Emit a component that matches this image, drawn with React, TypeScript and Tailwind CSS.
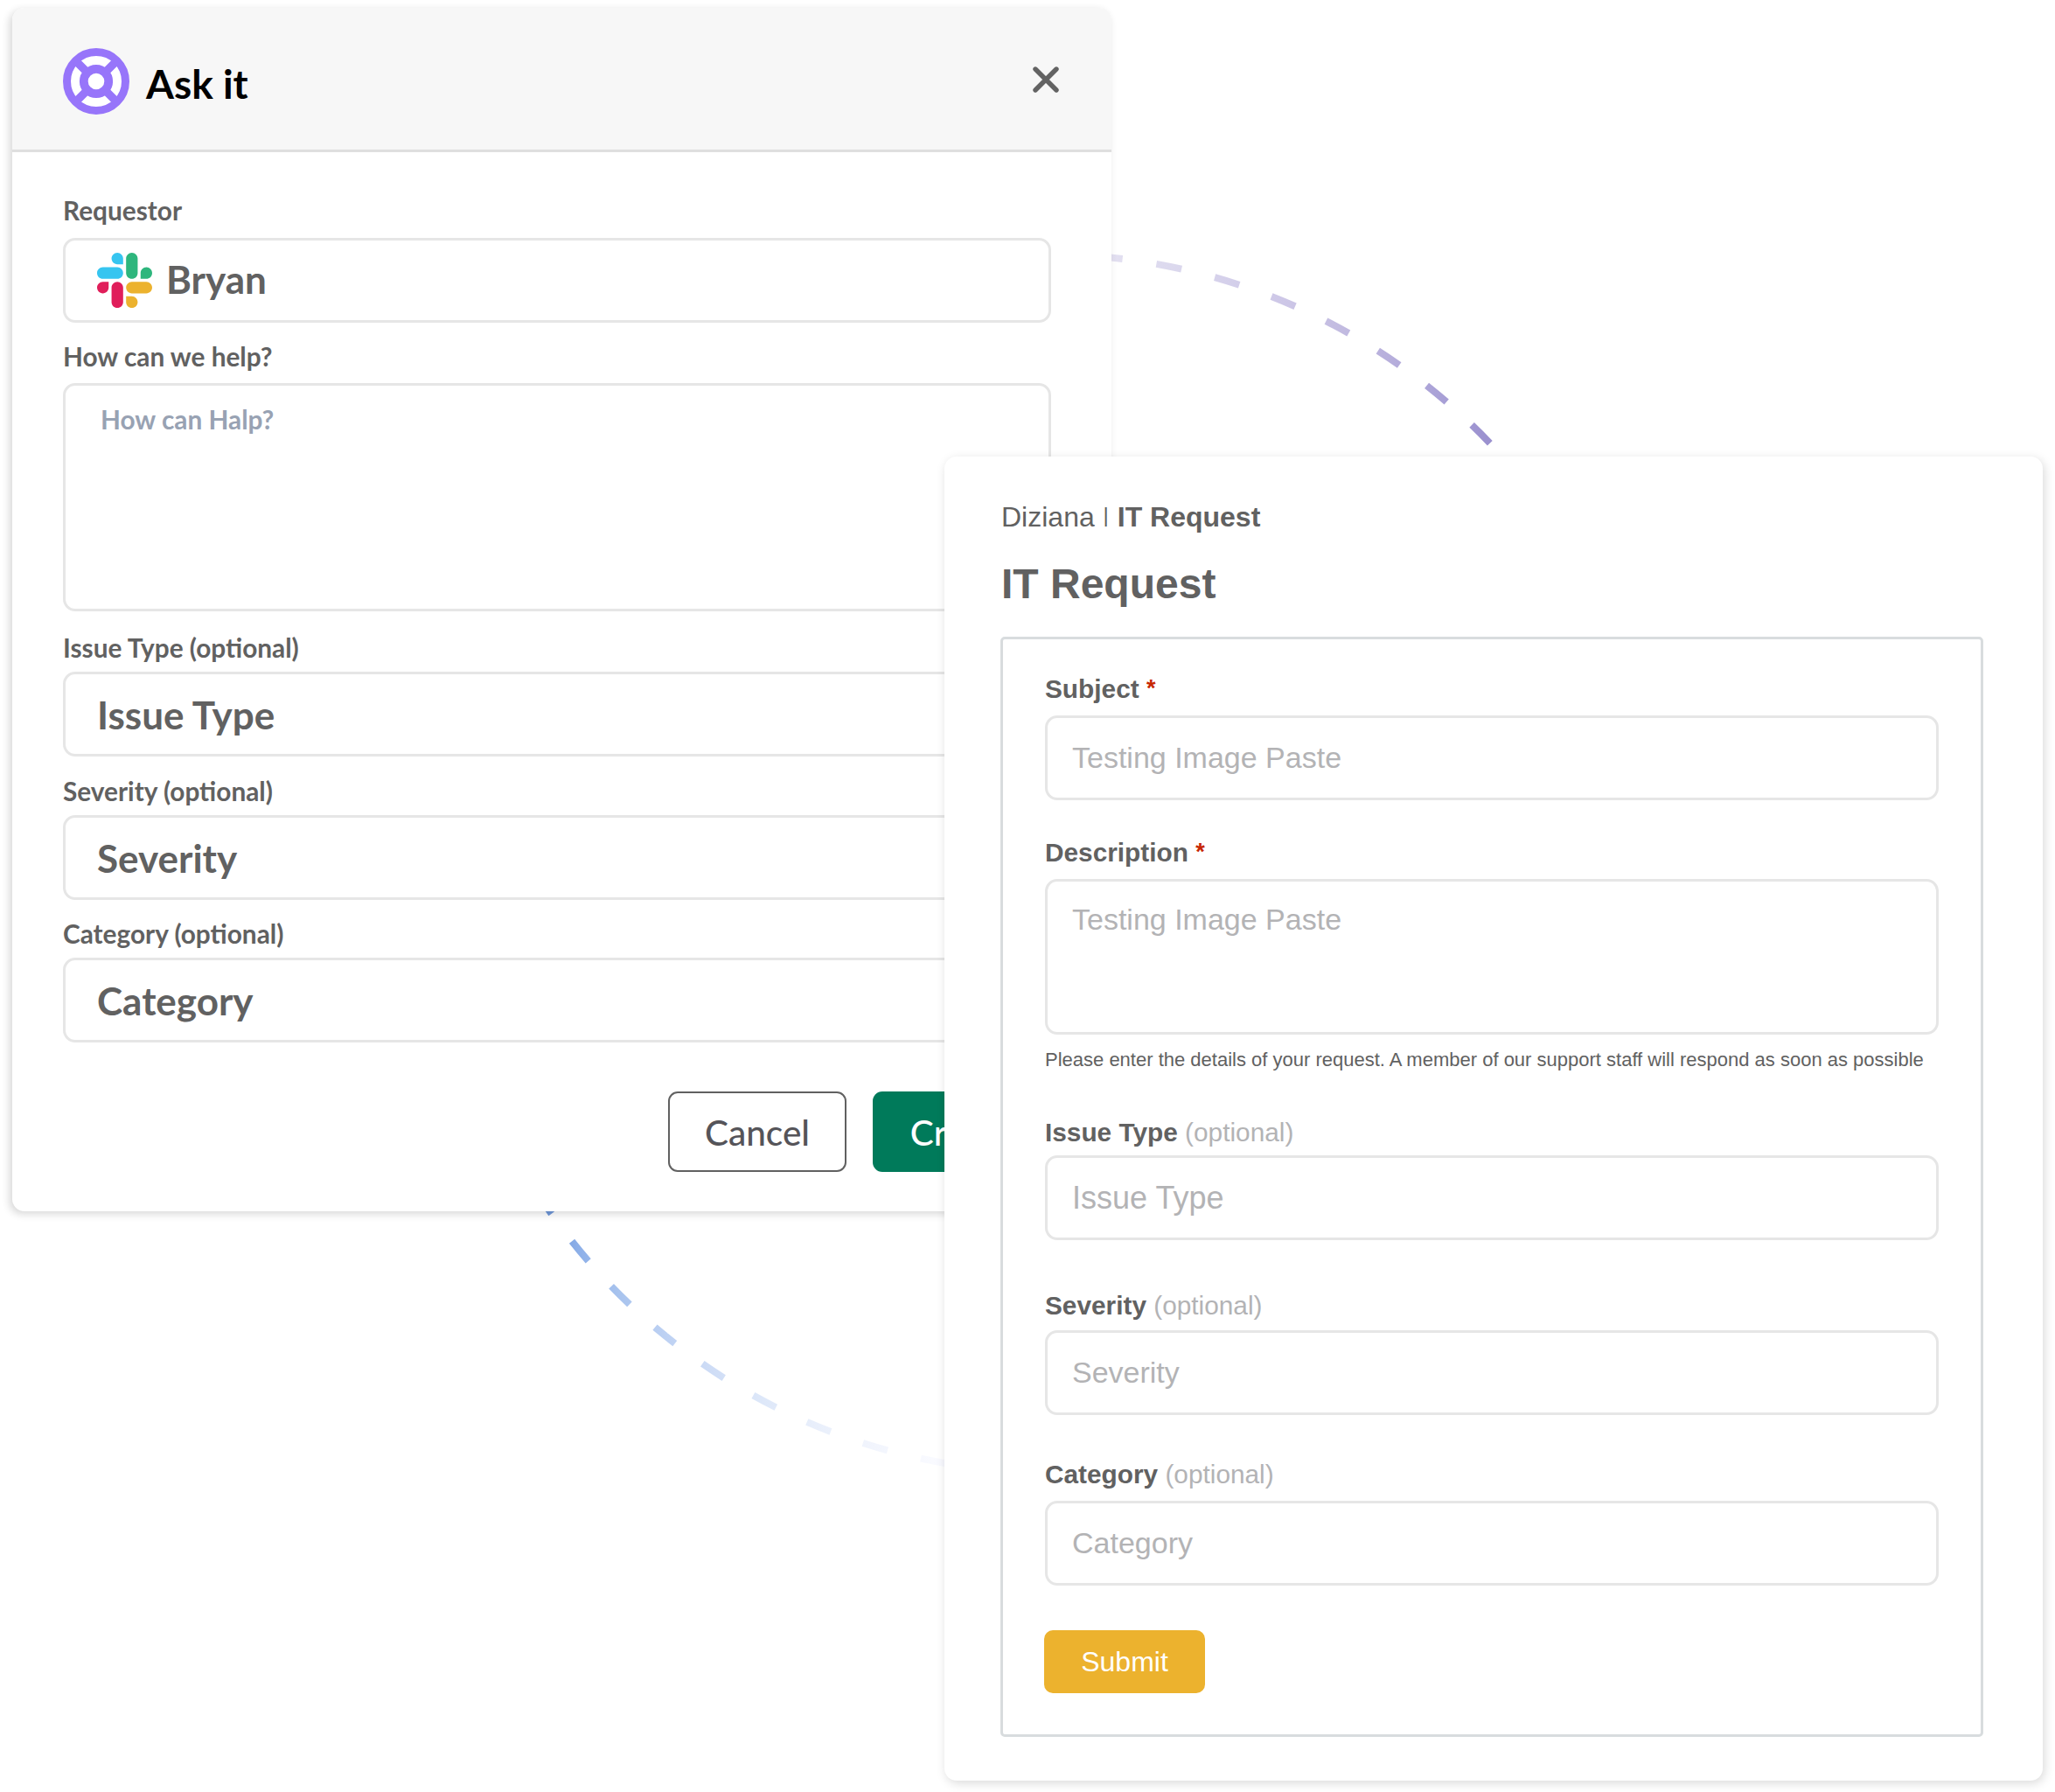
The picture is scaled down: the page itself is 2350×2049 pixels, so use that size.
import type { ReactNode } from "react";
import clsx from "clsx";

function LifebuoyIcon() {
  return (
    <svg width="76" height="76" viewBox="0 0 76 76" fill="none">
      <circle cx="38" cy="38" r="36" fill="#fff" />
      <g stroke="#9775fa">
        <circle cx="38" cy="38" r="33.5" strokeWidth="9" />
        <circle cx="38" cy="38" r="14.2" strokeWidth="9.8" />
        <path
          d="M14.5 14.5L27.5 27.5M61.5 14.5L48.5 27.5M14.5 61.5L27.5 48.5M61.5 61.5L48.5 48.5"
          strokeWidth="9.4"
        />
      </g>
    </svg>
  );
}

function CloseIcon() {
  return (
    <svg width="30" height="30" viewBox="0 0 30 30" fill="none">
      <path d="M3 3L27 27M27 3L3 27" stroke="#636363" strokeWidth="5.4" strokeLinecap="round" />
    </svg>
  );
}

function SlackIcon() {
  return (
    <svg width="63" height="63" viewBox="0 0 122.8 122.8">
      <path
        d="M25.8 77.6c0 7.1-5.8 12.9-12.9 12.9S0 84.7 0 77.6s5.8-12.9 12.9-12.9h12.9v12.9zm6.5 0c0-7.1 5.8-12.9 12.9-12.9s12.9 5.8 12.9 12.9v32.3c0 7.1-5.8 12.9-12.9 12.9s-12.9-5.8-12.9-12.9V77.6z"
        fill="#e01e5a"
      />
      <path
        d="M45.2 25.8c-7.1 0-12.9-5.8-12.9-12.9S38.1 0 45.2 0s12.9 5.8 12.9 12.9v12.9H45.2zm0 6.5c7.1 0 12.9 5.8 12.9 12.9s-5.8 12.9-12.9 12.9H12.9C5.8 58.1 0 52.3 0 45.2s5.8-12.9 12.9-12.9h32.3z"
        fill="#36c5f0"
      />
      <path
        d="M97 45.2c0-7.1 5.8-12.9 12.9-12.9s12.9 5.8 12.9 12.9-5.8 12.9-12.9 12.9H97V45.2zm-6.5 0c0 7.1-5.8 12.9-12.9 12.9s-12.9-5.8-12.9-12.9V12.9C64.7 5.8 70.5 0 77.6 0s12.9 5.8 12.9 12.9v32.3z"
        fill="#2eb67d"
      />
      <path
        d="M77.6 97c7.1 0 12.9 5.8 12.9 12.9s-5.8 12.9-12.9 12.9-12.9-5.8-12.9-12.9V97h12.9zm0-6.5c-7.1 0-12.9-5.8-12.9-12.9s5.8-12.9 12.9-12.9h32.3c7.1 0 12.9 5.8 12.9 12.9s-5.8 12.9-12.9 12.9H77.6z"
        fill="#ecb22e"
      />
    </svg>
  );
}

// Dashed ring that connects the two cards, only its open arcs are visible
function DashedRing() {
  return (
    <svg className="[grid-area:1/1]" width="2350" height="2049" viewBox="0 0 2350 2049" fill="none">
      <defs>
        <linearGradient id="ring" gradientUnits="userSpaceOnUse" x1="600" y1="0" x2="1700" y2="0">
          <stop offset="0.025" stopColor="#6f98da" />
          <stop offset="0.058" stopColor="#8fb1e9" />
          <stop offset="0.1" stopColor="#a9c4ee" />
          <stop offset="0.146" stopColor="#bdd1f3" />
          <stop offset="0.196" stopColor="#cfddf6" />
          <stop offset="0.249" stopColor="#dee8f9" />
          <stop offset="0.305" stopColor="#e9effb" />
          <stop offset="0.364" stopColor="#f2f5fd" />
          <stop offset="0.424" stopColor="#f9faff" />
          <stop offset="0.609" stopColor="#e3e0f1" />
          <stop offset="0.671" stopColor="#dcd9ee" />
          <stop offset="0.79" stopColor="#cdc7e7" />
          <stop offset="0.845" stopColor="#c3bce1" />
          <stop offset="0.899" stopColor="#b7afdc" />
          <stop offset="0.948" stopColor="#aaa2d7" />
          <stop offset="1" stopColor="#9b91cf" />
        </linearGradient>
      </defs>
      <circle
        cx="1200"
        cy="987.2"
        r="696.2"
        stroke="url(#ring)"
        strokeWidth="8"
        pathLength="447.14"
        strokeDasharray="3 4"
        strokeDashoffset="2.067"
      />
    </svg>
  );
}

interface FieldProps {
  label: ReactNode;
  className?: string;
  boxClassName?: string;
  children: ReactNode;
}

function Field({ label, className, boxClassName, children }: FieldProps) {
  return (
    <div className={clsx("flex flex-col", className)}>
      <div className="leading-9 whitespace-nowrap">{label}</div>
      <div className={clsx("flex border-3 border-[#e6e6e6] rounded-[14px]", boxClassName)}>{children}</div>
    </div>
  );
}

function AskItCard() {
  const selects = [
    { name: "Issue Type", spacing: "mt-[24px] gap-[9px]" },
    { name: "Severity", spacing: "mt-[22px] gap-[9px]" },
    { name: "Category", spacing: "mt-[21px] gap-[9px]" },
  ];

  return (
    <div className="[grid-area:1/1] ml-[14px] mt-[9px] w-[1257px] h-[1376px] bg-white rounded-[14px] overflow-hidden text-[#616161] font-bold font-['Lato',sans-serif] shadow-[-3px_3px_10px_rgba(0,0,0,0.16)]">
      {/* Header */}
      <div className="h-[165px] bg-[#f7f7f7] border-b-3 border-[#dfdfdf] pl-[58px] pr-[60px] pb-[6px] flex items-center justify-between">
        <div className="flex items-center gap-[19px] pt-[12px]">
          <LifebuoyIcon />
          <h1 className="text-[46px] leading-[56px] text-black pt-[5px]">Ask it</h1>
        </div>
        <button className="pt-[8px]">
          <CloseIcon />
        </button>
      </div>

      {/* Body */}
      <div className="pl-[58px] pr-[69px] pt-[49px] flex flex-col text-[29.8px]">
        <Field label="Requestor" className="gap-[13px]" boxClassName="h-[97px] items-center gap-[16px] pl-[36px]">
          <SlackIcon />
          <span className="text-[44px] leading-[52px] pb-[3px]">Bryan</span>
        </Field>

        <Field label="How can we help?" className="mt-[21px] gap-[12px]" boxClassName="h-[261px] pl-[40px] pt-[21px]">
          <span className="leading-9 text-[#98a2b3]">How can Halp?</span>
        </Field>

        {selects.map(({ name, spacing }) => (
          <Field key={name} label={`${name} (optional)`} className={spacing} boxClassName="h-[97px] items-center pl-[36px]">
            <span className="text-[44px] leading-[52px]">{name}</span>
          </Field>
        ))}

        <div className="mt-[56px] flex justify-end gap-[30px] text-[40.5px] font-medium">
          <button className="w-[204px] h-[92px] pt-[3px] border-2 border-[#616161] rounded-[11px] text-[#555459]">
            Cancel
          </button>
          <button className="w-[204px] h-[92px] pt-[3px] rounded-[11px] bg-[#007a5a] text-white">Create</button>
        </div>
      </div>
    </div>
  );
}

function Required() {
  return <span className="text-[27px] leading-none align-[2px] text-[#c72600]">*</span>;
}

function Optional() {
  return <span className="font-normal text-[#b3b3b5]">(optional)</span>;
}

function RequestCard() {
  const optionalFields = [
    { name: "Issue Type", spacing: "mt-[51px] gap-[8px]", textSize: "text-[36px]" },
    { name: "Severity", spacing: "mt-[57px] gap-[10px]", textSize: "text-[34px]" },
    { name: "Category", spacing: "mt-[50px] gap-[12px]", textSize: "text-[34px]" },
  ];

  return (
    <div className="[grid-area:1/1] ml-[1080px] mt-[522px] w-[1256px] h-[1514px] bg-white rounded-[14px] pl-[64px] pr-[68px] pt-[49px] text-[#616161] font-['Liberation_Sans',Arial,sans-serif] shadow-[2px_3px_12px_rgba(0,0,0,0.15)]">
      <div className="pl-px text-[32px] leading-10">
        Diziana <span className="mx-px text-[24px] leading-none align-[5px]">|</span>{" "}
        <span className="font-bold">IT Request</span>
      </div>
      <h2 className="mt-[29px] pl-px text-[48px] leading-[56px] font-bold">IT Request</h2>

      {/* Request form */}
      <div className="mt-[32px] h-[1258px] border-3 border-[#d8dcde] rounded-[5px] px-[48px] pt-[39px] flex flex-col items-stretch text-[29.8px] font-bold">
        <Field label={<>Subject <Required /></>} className="gap-[12px]" boxClassName="h-[97px] items-center pl-[28px] pb-px">
          <span className="text-[34px] font-normal text-[#b3b3b5]">Testing Image Paste</span>
        </Field>

        <Field label={<>Description <Required /></>} className="mt-[42px] gap-[12px]" boxClassName="h-[178px] pl-[28px] pt-[23px]">
          <span className="text-[34px] leading-10 font-normal text-[#b3b3b5]">Testing Image Paste</span>
        </Field>
        <p className="mt-[15px] text-[22px] leading-7 font-normal whitespace-nowrap">
          Please enter the details of your request. A member of our support staff will respond as soon as possible
        </p>

        {optionalFields.map(({ name, spacing, textSize }) => (
          <Field key={name} label={<>{name} <Optional /></>} className={spacing} boxClassName="h-[97px] items-center pl-[28px]">
            <span className={clsx("font-normal text-[#b3b3b5]", textSize)}>{name}</span>
          </Field>
        ))}

        <button className="mt-[51px] -ml-px w-[184px] h-[72px] self-start rounded-[10px] bg-[#ecb22e] text-[32px] font-normal text-white">
          Submit
        </button>
      </div>
    </div>
  );
}

export default function App() {
  return (
    <div className="w-[2350px] h-[2049px] bg-white overflow-hidden grid items-start justify-items-start">
      <DashedRing />
      <AskItCard />
      <RequestCard />
    </div>
  );
}
